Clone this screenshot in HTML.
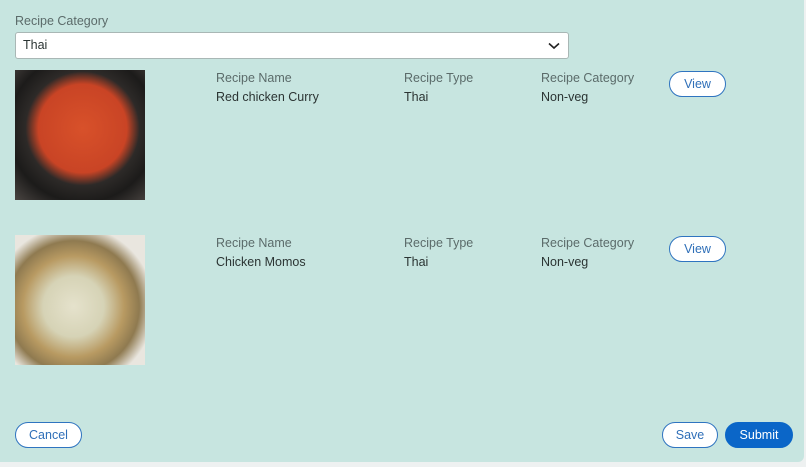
<!DOCTYPE html>
<html><head><style>
body{margin:0;width:806px;height:467px;background:#eef1f1;font-family:"Liberation Sans",sans-serif;position:relative;overflow:hidden}
.panel{position:absolute;left:0;top:0;width:804px;height:462px;background:#c7e5e0;border-radius:0 0 6px 0}
.a{position:absolute;font-size:12.5px;white-space:nowrap}
.lbl{color:#5b6b6a}
.val{color:#2b3433}
.sel{position:absolute;left:15px;top:32px;width:552px;height:25px;background:#fff;border:1px solid #a9b7b5;border-radius:3px}
.btn{position:absolute;height:26px;border-radius:14px;background:#fff;border:1px solid #2f74c0;color:#2f6fb8;font-size:12.5px;text-align:center;line-height:25px;box-sizing:border-box}
.img1{position:absolute;left:15px;top:70px;width:130px;height:130px;background:radial-gradient(circle at 52% 45%,#d8512a 0,#c94425 45%,#2d2a28 58%,#1c1b1a 75%,#4a4542 100%)}
.img2{position:absolute;left:15px;top:235px;width:130px;height:130px;background:radial-gradient(circle at 45% 55%,#e5e2cc 0,#d6d3b6 30%,#b89a62 50%,#8f7a50 65%,#e9e6df 80%)}
</style></head><body>
<div class="panel"></div>
<div class="a lbl" style="left:15px;top:14px">Recipe Category</div>
<div class="sel"><span class="a val" style="left:7px;top:5px">Thai</span>
<svg style="position:absolute;right:8px;top:9px" width="12" height="8" viewBox="0 0 12 8"><path d="M1 1.5 6 6 11 1.5" fill="none" stroke="#222" stroke-width="1.6"/></svg></div>
<div class="img1"></div>
<div class="a lbl" style="left:216px;top:71px">Recipe Name</div><div class="a val" style="left:216px;top:90px">Red chicken Curry</div>
<div class="a lbl" style="left:404px;top:71px">Recipe Type</div><div class="a val" style="left:404px;top:90px">Thai</div>
<div class="a lbl" style="left:541px;top:71px">Recipe Category</div><div class="a val" style="left:541px;top:90px">Non-veg</div>
<div class="btn" style="left:669px;top:71px;width:57px">View</div>
<div class="img2"></div>
<div class="a lbl" style="left:216px;top:236px">Recipe Name</div><div class="a val" style="left:216px;top:255px">Chicken Momos</div>
<div class="a lbl" style="left:404px;top:236px">Recipe Type</div><div class="a val" style="left:404px;top:255px">Thai</div>
<div class="a lbl" style="left:541px;top:236px">Recipe Category</div><div class="a val" style="left:541px;top:255px">Non-veg</div>
<div class="btn" style="left:669px;top:236px;width:57px">View</div>
<div class="btn" style="left:15px;top:422px;width:67px">Cancel</div>
<div class="btn" style="left:662px;top:422px;width:56px">Save</div>
<div class="btn" style="left:725px;top:422px;width:68px;background:#0b66c8;color:#fff;border-color:#0b66c8">Submit</div>
</body></html>
